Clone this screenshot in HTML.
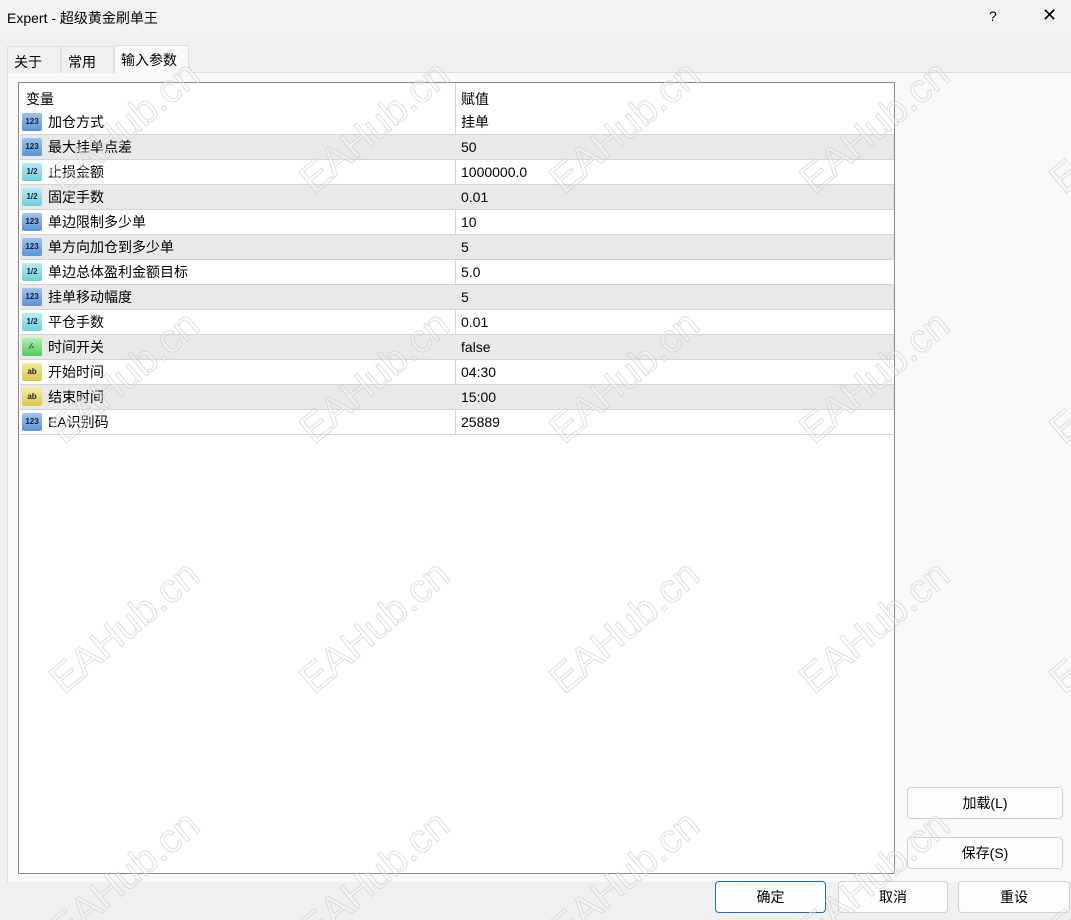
<!DOCTYPE html>
<html><head><meta charset="utf-8"><style>
*{margin:0;padding:0;box-sizing:border-box}
html{overflow:hidden;width:1071px;height:920px}
body{width:1071px;height:920px;background:#f0f0f0;font-family:"Liberation Sans","Noto Sans CJK SC",sans-serif;font-size:14px;color:#000;position:relative;overflow:hidden}
.title{position:absolute;left:0;top:0;width:1071px;height:35px;background:#f3f2f3}
.title span{position:absolute;top:8px;font-size:14px}
.panel{position:absolute;left:7px;top:72px;width:1064px;height:810px;background:#f9f9f9;border-top:1px solid #dcdcdc;border-left:1px solid #dcdcdc}
.tab{position:absolute;top:46px;height:27px;border:1px solid #e0e0e0;border-bottom:none;padding:5px 0 0 6px;font-size:14px;background:#f0f0f0}
.tab.act{top:45px;background:#f9f9f9;height:28px;padding-top:4px}
.grid{position:absolute;left:18px;top:82px;width:877px;height:792px;background:#fff;border:1px solid #888}
.row{position:absolute;left:1px;width:874px;height:25px;border-bottom:1px solid #d4d4d4}
.row.g{background:#e9e9e9}
.row span{position:absolute;top:4px;line-height:17px}
.row .n{left:28px}
.row .v{left:441px}
.row .ic{position:absolute;left:2px;top:3px;width:20px;height:18px;border-radius:2px;font:bold 8px "Liberation Sans",sans-serif;text-align:center;line-height:18px;color:#123}
.i123{background:linear-gradient(#9cc3ee,#5d93d4)}
.ihalf{background:linear-gradient(#b5ecf3,#6fcfdc)}
.ib{background:linear-gradient(#aef0ae,#56c95b)}
.iab{background:linear-gradient(#f5ec9c,#d9c750)}
.vl{position:absolute;left:436px;top:0;width:1px;height:352px;background:#d8d8d8}
.btn{position:absolute;height:32px;border:1px solid #d0d0d0;border-radius:4px;background:#fdfdfd;text-align:center;line-height:30px;font-size:14px}
.wm{position:absolute;font:40px "Liberation Sans",sans-serif;color:rgba(255,255,255,0.3);-webkit-text-stroke:1px rgba(200,200,200,0.6);transform:rotate(-40deg);white-space:nowrap;width:200px;text-align:center;pointer-events:none}
</style></head><body>
<div class="title"><span style="left:7px">Expert - 超级黄金刷单王</span><span style="left:989px">?</span><span style="left:1042px;font-size:18px;top:5px;font-weight:normal">✕</span></div>
<div class="panel"></div>
<div class="tab" style="left:7px;width:54px">关于</div>
<div class="tab" style="left:61px;width:53px">常用</div>
<div class="tab act" style="left:114px;width:75px">输入参数</div>
<div class="grid">
<div style="position:absolute;left:7px;top:6px">变量</div>
<div style="position:absolute;left:442px;top:6px">赋值</div>
<div class="vl"></div>
<div class="row" style="top:27px"><div class="ic i123">123</div><span class="n">加仓方式</span><span class="v">挂单</span></div>
<div class="row g" style="top:52px"><div class="ic i123">123</div><span class="n">最大挂单点差</span><span class="v">50</span></div>
<div class="row" style="top:77px"><div class="ic ihalf">1/2</div><span class="n">止损金额</span><span class="v">1000000.0</span></div>
<div class="row g" style="top:102px"><div class="ic ihalf">1/2</div><span class="n">固定手数</span><span class="v">0.01</span></div>
<div class="row" style="top:127px"><div class="ic i123">123</div><span class="n">单边限制多少单</span><span class="v">10</span></div>
<div class="row g" style="top:152px"><div class="ic i123">123</div><span class="n">单方向加仓到多少单</span><span class="v">5</span></div>
<div class="row" style="top:177px"><div class="ic ihalf">1/2</div><span class="n">单边总体盈利金额目标</span><span class="v">5.0</span></div>
<div class="row g" style="top:202px"><div class="ic i123">123</div><span class="n">挂单移动幅度</span><span class="v">5</span></div>
<div class="row" style="top:227px"><div class="ic ihalf">1/2</div><span class="n">平仓手数</span><span class="v">0.01</span></div>
<div class="row g" style="top:252px"><div class="ic ib">⁄-</div><span class="n">时间开关</span><span class="v">false</span></div>
<div class="row" style="top:277px"><div class="ic iab">ab</div><span class="n">开始时间</span><span class="v">04:30</span></div>
<div class="row g" style="top:302px"><div class="ic iab">ab</div><span class="n">结束时间</span><span class="v">15:00</span></div>
<div class="row" style="top:327px"><div class="ic i123">123</div><span class="n">EA识别码</span><span class="v">25889</span></div>
</div>
<div class="btn" style="left:907px;top:787px;width:156px">加载(L)</div>
<div class="btn" style="left:907px;top:837px;width:156px">保存(S)</div>
<div class="btn" style="left:715px;top:881px;width:111px;border-color:#1a6fc4">确定</div>
<div class="btn" style="left:838px;top:881px;width:110px">取消</div>
<div class="btn" style="left:958px;top:881px;width:112px">重设</div>
<div class="wm" style="left:25px;top:105px">EAHub.cn</div>
<div class="wm" style="left:275px;top:105px">EAHub.cn</div>
<div class="wm" style="left:525px;top:105px">EAHub.cn</div>
<div class="wm" style="left:775px;top:105px">EAHub.cn</div>
<div class="wm" style="left:1025px;top:105px">EAHub.cn</div>
<div class="wm" style="left:25px;top:355px">EAHub.cn</div>
<div class="wm" style="left:275px;top:355px">EAHub.cn</div>
<div class="wm" style="left:525px;top:355px">EAHub.cn</div>
<div class="wm" style="left:775px;top:355px">EAHub.cn</div>
<div class="wm" style="left:1025px;top:355px">EAHub.cn</div>
<div class="wm" style="left:25px;top:605px">EAHub.cn</div>
<div class="wm" style="left:275px;top:605px">EAHub.cn</div>
<div class="wm" style="left:525px;top:605px">EAHub.cn</div>
<div class="wm" style="left:775px;top:605px">EAHub.cn</div>
<div class="wm" style="left:1025px;top:605px">EAHub.cn</div>
<div class="wm" style="left:25px;top:855px">EAHub.cn</div>
<div class="wm" style="left:275px;top:855px">EAHub.cn</div>
<div class="wm" style="left:525px;top:855px">EAHub.cn</div>
<div class="wm" style="left:775px;top:855px">EAHub.cn</div>
<div class="wm" style="left:1025px;top:855px">EAHub.cn</div>
</body></html>
